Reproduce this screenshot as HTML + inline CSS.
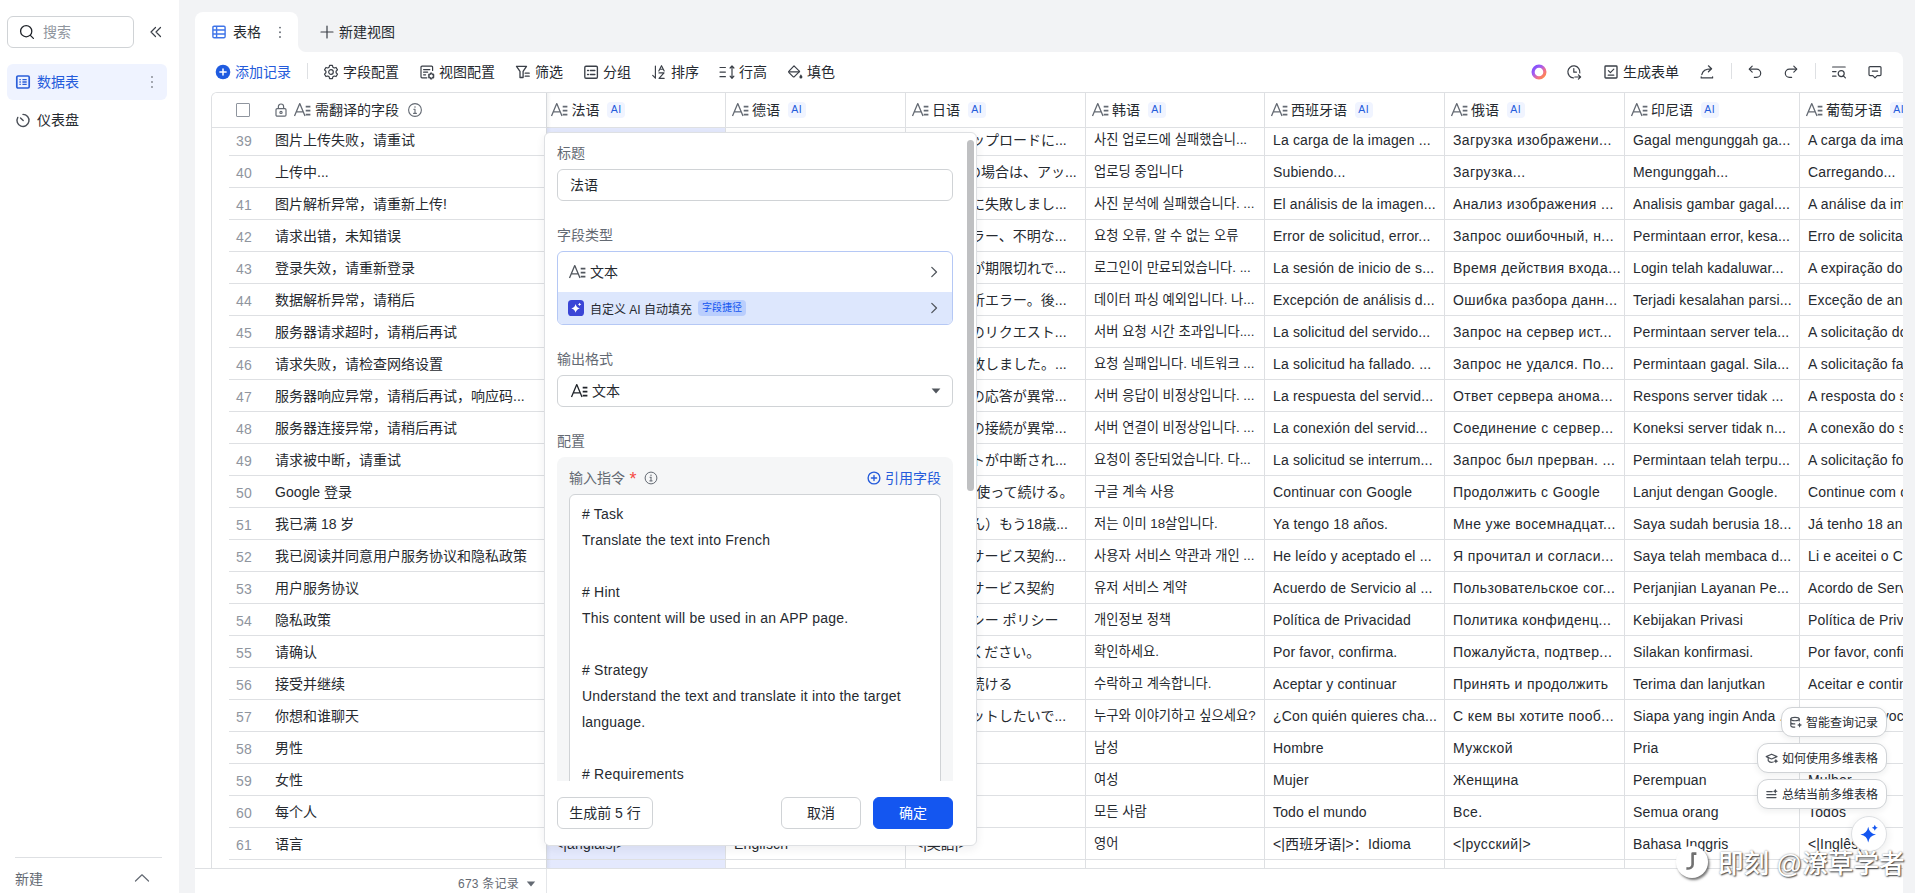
<!DOCTYPE html>
<html lang="zh-CN">
<head>
<meta charset="utf-8">
<title>多维表格</title>
<style>
*{box-sizing:border-box;margin:0;padding:0}
html,body{width:1915px;height:893px;overflow:hidden;background:#fff}
body{font-family:"Liberation Sans","Noto Sans CJK SC",sans-serif;font-size:14px;color:#262a30;position:relative}
.jp{font-family:"Liberation Sans","Noto Sans CJK JP",sans-serif}
.kr{font-family:"Liberation Sans","Noto Sans CJK KR",sans-serif}
.abs{position:absolute}
svg{display:block}
#sidebar{position:absolute;left:0;top:0;width:179px;height:893px;background:#fff}
#mainbg{position:absolute;left:179px;top:0;width:1736px;height:893px;background:#f2f3f5}
#panel{position:absolute;left:195px;top:52px;width:1708px;height:841px;background:#fff;border-radius:0 8px 0 0}
#tab{position:absolute;left:195px;top:12px;width:103px;height:41px;background:#fff;border-radius:8px 8px 0 0}
#tabcurve{position:absolute;left:298px;top:44px;width:8px;height:8px;background:radial-gradient(circle at 100% 0,#f2f3f5 7.5px,#fff 8.5px)}
.t{position:absolute;white-space:nowrap;line-height:20px;height:20px}
.g{color:#646a73}
.grid{position:absolute;left:211px;top:92px;width:1692px;height:777px;overflow:hidden;border-top:1px solid #dee0e3;border-left:1px solid #dee0e3;border-radius:6px 0 0 0}
.row{position:absolute;left:17px;height:32px;width:1700px;border-bottom:1px solid #dee0e3}
.cell{position:absolute;top:0;height:31px;line-height:31px;white-space:nowrap;overflow:hidden;font-size:14px;padding-left:8px;border-left:1px solid #dee0e3}
.cell.la{line-height:33px;letter-spacing:.15px}
.cell.ru{line-height:33px;letter-spacing:.38px}
.cell.kr{font-size:13.3px;line-height:32px}
.cell.jp{padding-left:9px;line-height:32.6px}
.num{position:absolute;left:7px;top:1.3px;line-height:32px;color:#8f959e;font-size:14px;letter-spacing:.3px}
.c0{position:absolute;left:46px;top:0;line-height:32px;white-space:nowrap}
.hdr{position:absolute;left:0;top:0;width:1700px;height:35px;background:#fff;border-bottom:1px solid #dee0e3}
.hc{position:absolute;top:0;height:34px;border-left:1px solid #dee0e3}
.hc .ic-at{position:absolute;left:4.5px;top:9px;color:#646a73}
.hc .ht{position:absolute;left:26px;top:7px;line-height:20px;white-space:nowrap}
.ai{position:absolute;top:9px;width:18px;height:16px;border-radius:4px;background:#f0f4ff;color:#245bdb;font-size:10.5px;line-height:15px;text-align:center;letter-spacing:.4px;padding-left:.4px}
.footer{position:absolute;left:195px;top:868px;width:1708px;height:25px;border-top:1px solid #dee0e3;background:#fff}
.modal{position:absolute;left:544px;top:132px;width:433px;height:714px;background:#fff;border:1px solid #dee0e3;border-radius:6px;box-shadow:0 3px 10px rgba(31,35,41,.07);overflow:hidden}
.lbl{position:absolute;left:12px;line-height:20px;color:#646a73;font-size:14px}
.inp{position:absolute;left:12px;width:396px;height:32px;border:1px solid #d0d3d6;border-radius:6px;background:#fff}
.btn{position:absolute;height:32px;border:1px solid #d0d3d6;border-radius:6px;background:#fff;line-height:30px;text-align:center;font-size:14px}
.pill{position:absolute;height:30px;border:1px solid #d0d3d6;border-radius:11px;background:#fff;box-shadow:0 2px 6px rgba(31,35,41,.08);font-size:12px;line-height:27px;white-space:nowrap}
</style>
</head>
<body>
<div id="sidebar">
<div class="abs" style="left:7px;top:16px;width:127px;height:32px;border:1px solid #d0d3d6;border-radius:6px"></div>
<svg class="abs" style="left:19px;top:24px" width="16" height="16" viewBox="0 0 16 16" fill="none" stroke="#1f2329" stroke-width="1.3" stroke-linecap="round"><circle cx="7.2" cy="7.2" r="5.6"/><path d="M11.4 11.4 L14.4 14.4"/></svg>
<div class="t" style="left:43px;top:22px;color:#8f959e">搜索</div>
<svg class="abs" style="left:148px;top:24px" width="16" height="16" viewBox="0 0 16 16" fill="none" stroke="#3a3f47" stroke-width="1.2" stroke-linecap="round" stroke-linejoin="round"><path d="M7.5 3.5 L3 8 L7.5 12.5 M12.5 3.5 L8 8 L12.5 12.5"/></svg>
<div class="abs" style="left:7px;top:64px;width:160px;height:36px;border-radius:6px;background:#eff3ff"></div>
<svg class="abs" style="left:15px;top:74px" width="16" height="16" viewBox="0 0 16 16" fill="none" stroke="#2b5fd9" stroke-width="1.7" stroke-linejoin="round"><rect x="1.8" y="2" width="12.4" height="12" rx="1.2"/><path d="M4.4 5.6 H5.8 M7.4 5.6 H11.7 M4.4 8 H5.8 M7.4 8 H11.7 M4.4 10.4 H5.8 M7.4 10.4 H11.7" stroke-linecap="butt" stroke-width="1.4"/></svg>
<div class="t" style="left:37px;top:72px;color:#245bdb">数据表</div>
<svg class="abs" style="left:149px;top:75px" width="6" height="14" viewBox="0 0 6 14" fill="#80858d"><circle cx="3" cy="2" r=".9"/><circle cx="3" cy="7" r=".9"/><circle cx="3" cy="12" r=".9"/></svg>
<svg class="abs" style="left:15px;top:112px" width="16" height="16" viewBox="0 0 16 16" fill="none" stroke="#4a4f57" stroke-width="1.4" stroke-linecap="round"><path d="M8 2.4 A6 6 0 1 1 2.8 5.4"/><path d="M8.2 8.6 L5.5 5.9"/></svg>
<div class="t" style="left:37px;top:110px">仪表盘</div>
<div class="abs" style="left:15px;top:857px;width:147px;height:1px;background:#dee0e3"></div>
<div class="t g" style="left:15px;top:869px">新建</div>
<svg class="abs" style="left:134px;top:872px" width="16" height="12" viewBox="0 0 16 12" fill="none" stroke="#646a73" stroke-width="1.2" stroke-linecap="round" stroke-linejoin="round"><path d="M1.5 9 L8 2.8 L14.5 9"/></svg>
</div>
<div id="mainbg"></div>
<div id="tab"></div><div id="tabcurve"></div>
<div id="panel"></div>
<svg class="abs" style="left:212px;top:25px" width="14" height="14" viewBox="0 0 14 14" fill="none" stroke="#3f74e8" stroke-width="1.4"><rect x=".9" y="1.2" width="12.2" height="11.6" rx="1.2"/><path d="M.9 5 H13.1 M.9 9 H13.1 M4.6 1.2 V12.8"/></svg>
<div class="t" style="left:233px;top:22px">表格</div>
<svg class="abs" style="left:277px;top:26px" width="6" height="14" viewBox="0 0 6 14" fill="#646a73"><circle cx="3" cy="1.6" r=".95"/><circle cx="3" cy="6.3" r=".95"/><circle cx="3" cy="11" r=".95"/></svg>
<svg class="abs" style="left:320px;top:25px" width="14" height="14" viewBox="0 0 14 14" fill="none" stroke="#3a3f47" stroke-width="1.2" stroke-linecap="round"><path d="M7 1 V13 M1 7 H13"/></svg>
<div class="t" style="left:339px;top:22px">新建视图</div>
<svg class="abs" style="left:215px;top:64px" width="16" height="16" viewBox="0 0 16 16"><circle cx="8" cy="8" r="7.3" fill="#1f5be0"/><path d="M8 4.9 V11.1 M4.9 8 H11.1" stroke="#fff" stroke-width="1.5" stroke-linecap="round"/></svg>
<div class="t" style="left:235px;top:62px;color:#245bdb">添加记录</div>
<div class="abs" style="left:307px;top:63px;width:1px;height:16px;background:#dee0e3"></div>
<svg class="abs" style="left:323px;top:64px" width="16" height="16" viewBox="0 0 16 16" fill="none" stroke="#3a3f47" stroke-width="1.2" stroke-linejoin="round"><path d="M9.85 3.19 L9.41 1.35 L6.59 1.35 L6.15 3.19 L4.76 4.00 L2.95 3.45 L1.53 5.90 L2.91 7.19 L2.91 8.81 L1.53 10.10 L2.95 12.55 L4.76 12.00 L6.15 12.81 L6.59 14.65 L9.41 14.65 L9.85 12.81 L11.24 12.00 L13.05 12.55 L14.47 10.10 L13.09 8.81 L13.09 7.19 L14.47 5.90 L13.05 3.45 L11.24 4.00Z"/><circle cx="8" cy="8" r="2.3"/></svg>
<div class="t" style="left:343px;top:62px">字段配置</div>
<svg class="abs" style="left:419px;top:64px" width="16" height="16" viewBox="0 0 16 16" fill="none" stroke="#3a3f47" stroke-width="1.2" stroke-linecap="round" stroke-linejoin="round"><path d="M13.6 6.4 V3.2 a1 1 0 0 0 -1 -1 H3 a1 1 0 0 0 -1 1 v9.6 a1 1 0 0 0 1 1 H7.8"/><path d="M4.6 5.6 H10.8 M4.6 8.2 H8.6 M4.6 10.8 H6.6"/><path d="M12.97 10.26 L12.85 9.17 L11.55 9.17 L11.43 10.26 L11.08 10.46 L10.08 10.02 L9.43 11.15 L10.31 11.80 L10.31 12.20 L9.43 12.85 L10.08 13.98 L11.08 13.54 L11.43 13.74 L11.55 14.83 L12.85 14.83 L12.97 13.74 L13.32 13.54 L14.32 13.98 L14.97 12.85 L14.09 12.20 L14.09 11.80 L14.97 11.15 L14.32 10.02 L13.32 10.46Z" stroke-width="1.1"/></svg>
<div class="t" style="left:439px;top:62px">视图配置</div>
<svg class="abs" style="left:514px;top:64px" width="16" height="16" viewBox="0 0 16 16" fill="none" stroke="#3a3f47" stroke-width="1.3" stroke-linecap="round" stroke-linejoin="round"><path d="M2.5 2.3 H12.5 L9.1 7.3 V13.5 H6 V7.3 Z"/><path d="M11.2 9.2 H15.2 M11.2 12.2 H15.2"/></svg>
<div class="t" style="left:535px;top:62px">筛选</div>
<svg class="abs" style="left:583px;top:64px" width="16" height="16" viewBox="0 0 16 16" fill="none" stroke="#3a3f47" stroke-width="1.35" stroke-linecap="round" stroke-linejoin="round"><rect x="1.8" y="2.2" width="12.6" height="12" rx="1.2"/><path d="M4.6 6.4 H5.4 M7.4 6.4 H11.8 M4.6 10.6 H5.4 M7.4 10.6 H11.8" stroke-width="1.5"/></svg>
<div class="t" style="left:603px;top:62px">分组</div>
<svg class="abs" style="left:651px;top:64px" width="16" height="16" viewBox="0 0 16 16" fill="none" stroke="#3a3f47" stroke-width="1.15" stroke-linecap="round" stroke-linejoin="round"><path d="M4.4 2 V14.2 L1.7 11.4"/><path d="M7.8 7 L10.5 1.7 L13.2 7 M8.8 5.2 H12.2"/><path d="M8 8.9 H13 L8 14.3 H13.2"/></svg>
<div class="t" style="left:671px;top:62px">排序</div>
<svg class="abs" style="left:718px;top:64px" width="18" height="16" viewBox="0 0 18 16" fill="none" stroke="#3a3f47" stroke-width="1.2" stroke-linecap="round" stroke-linejoin="round"><path d="M2 3.5 H7.4 M2 8.1 H7.4 M2 12.7 H7.4"/><path d="M14 2 V14.2 M12.1 4 L14 1.9 L15.9 4 M12.1 12.2 L14 14.3 L15.9 12.2"/></svg>
<div class="t" style="left:739px;top:62px">行高</div>
<svg class="abs" style="left:787px;top:64px" width="17" height="16" viewBox="0 0 17 16" fill="none" stroke="#3a3f47" stroke-width="1.2" stroke-linecap="round" stroke-linejoin="round"><path d="M7 1.8 L12.6 7.4 L7.4 12.6 a1 1 0 0 1 -1.4 0 L2 8.6 a1 1 0 0 1 0 -1.4 Z"/><path d="M2 7.8 H12.2"/><path d="M13.9 10.2 c1 1.4 1.5 2.2 1.5 2.9 a1.5 1.5 0 0 1 -3 0 c0-.7.5-1.5 1.5-2.9z" fill="#3a3f47" stroke="none"/></svg>
<div class="t" style="left:807px;top:62px">填色</div>
<svg class="abs" style="left:1530px;top:63px" width="18" height="18" viewBox="0 0 18 18"><defs><linearGradient id="rg" x1="0" y1="0" x2="1" y2="1"><stop offset="0" stop-color="#7a4dff"/><stop offset=".35" stop-color="#a35cf2"/><stop offset=".68" stop-color="#f2708c"/><stop offset="1" stop-color="#ff8f3a"/></linearGradient></defs><circle cx="9" cy="9" r="5.9" fill="none" stroke="url(#rg)" stroke-width="3.2"/></svg>
<svg class="abs" style="left:1566px;top:64px" width="16" height="16" viewBox="0 0 16 16" fill="none" stroke="#3a3f47" stroke-width="1.2" stroke-linecap="round" stroke-linejoin="round"><path d="M13.8 8.8 A6 6 0 1 0 7.4 13.9"/><path d="M7.8 4.6 V8.2 H10.4"/><path d="M8.8 13 H14.4 M12.4 10.9 L14.6 13 L12.4 15.1"/></svg>
<svg class="abs" style="left:1603px;top:64px" width="16" height="16" viewBox="0 0 16 16" fill="none" stroke="#3a3f47" stroke-width="1.2" stroke-linecap="round" stroke-linejoin="round"><rect x="2" y="2" width="12" height="12" rx=".8" stroke-width="1.35"/><path d="M5.4 6.6 L7.4 8.6 L10.8 5.2 M5.2 11.2 H10.8"/></svg>
<div class="t" style="left:1623px;top:62px">生成表单</div>
<svg class="abs" style="left:1699px;top:64px" width="16" height="16" viewBox="0 0 16 16" fill="none" stroke="#3a3f47" stroke-width="1.2" stroke-linecap="round" stroke-linejoin="round"><path d="M2.8 10.6 C3.6 6.8 6.8 4.8 12 4.8 M9.4 1.8 L12.6 4.8 L9.4 7.8"/><path d="M2.2 12.8 V13.9 H13.6 V12.8"/></svg>
<div class="abs" style="left:1731px;top:63px;width:1px;height:16px;background:#dee0e3"></div>
<svg class="abs" style="left:1747px;top:64px" width="16" height="16" viewBox="0 0 16 16" fill="none" stroke="#3a3f47" stroke-width="1.2" stroke-linecap="round" stroke-linejoin="round"><path d="M5.2 2.2 L2.2 5.2 L5.2 8.2"/><path d="M2.6 5.2 H9.6 a4.1 4.1 0 0 1 0 8.2 H7.4"/></svg>
<svg class="abs" style="left:1783px;top:64px" width="16" height="16" viewBox="0 0 16 16" fill="none" stroke="#3a3f47" stroke-width="1.2" stroke-linecap="round" stroke-linejoin="round"><path d="M10.8 2.2 L13.8 5.2 L10.8 8.2"/><path d="M13.4 5.2 H6.4 a4.1 4.1 0 0 0 0 8.2 H8.6"/></svg>
<div class="abs" style="left:1815px;top:63px;width:1px;height:16px;background:#dee0e3"></div>
<svg class="abs" style="left:1831px;top:64px" width="16" height="16" viewBox="0 0 16 16" fill="none" stroke="#3a3f47" stroke-width="1.2" stroke-linecap="round" stroke-linejoin="round"><path d="M1.6 3 H14.2 M1.6 7.6 H5 M1.6 12.2 H5"/><circle cx="10.2" cy="9.6" r="3"/><path d="M12.4 11.9 L14.4 13.9"/></svg>
<svg class="abs" style="left:1867px;top:64px" width="16" height="16" viewBox="0 0 16 16" fill="none" stroke="#3a3f47" stroke-width="1.2" stroke-linecap="round" stroke-linejoin="round"><path d="M2 3.6 a1 1 0 0 1 1-1 H13 a1 1 0 0 1 1 1 V10.6 a1 1 0 0 1 -1 1 H10.2 L8 13.8 L5.8 11.6 H3 a1 1 0 0 1 -1-1 Z"/><path d="M5.4 7.2 H10.6"/></svg>
<div class="grid">
<div class="abs" style="left:335px;top:35px;width:178px;height:745px;background:#e4e9fd"></div>
<div class="row" style="top:31px"><span class="num">39</span><span class="c0">图片上传失败，请重试</span><span class="cell la" style="left:317px;width:179px"></span><span class="cell la" style="left:496px;width:180px"></span><span class="cell jp" style="left:676px;width:180px">写真のアップロードに...</span><span class="cell kr" style="left:856px;width:179px">사진 업로드에 실패했습니...</span><span class="cell la" style="left:1035px;width:180px">La carga de la imagen ...</span><span class="cell ru" style="left:1215px;width:180px">Загрузка изображени...</span><span class="cell la" style="left:1395px;width:175px">Gagal mengunggah ga...</span><span class="cell la" style="left:1570px;width:181px">A carga da imagem falhou</span></div>
<div class="row" style="top:63px"><span class="num">40</span><span class="c0">上传中...</span><span class="cell la" style="left:317px;width:179px"></span><span class="cell la" style="left:496px;width:180px"></span><span class="cell jp" style="left:676px;width:180px;padding-left:19px">読込中の場合は、アッ...</span><span class="cell kr" style="left:856px;width:179px">업로딩 중입니다</span><span class="cell la" style="left:1035px;width:180px">Subiendo...</span><span class="cell ru" style="left:1215px;width:180px">Загрузка...</span><span class="cell la" style="left:1395px;width:175px">Mengunggah...</span><span class="cell la" style="left:1570px;width:181px">Carregando...</span></div>
<div class="row" style="top:95px"><span class="num">41</span><span class="c0">图片解析异常，请重新上传!</span><span class="cell la" style="left:317px;width:179px"></span><span class="cell la" style="left:496px;width:180px"></span><span class="cell jp" style="left:676px;width:180px">写真解析に失敗しまし...</span><span class="cell kr" style="left:856px;width:179px">사진 분석에 실패했습니다. ...</span><span class="cell la" style="left:1035px;width:180px">El análisis de la imagen...</span><span class="cell ru" style="left:1215px;width:180px">Анализ изображения ...</span><span class="cell la" style="left:1395px;width:175px">Analisis gambar gagal....</span><span class="cell la" style="left:1570px;width:181px">A análise da imagem falhou</span></div>
<div class="row" style="top:127px"><span class="num">42</span><span class="c0">请求出错，未知错误</span><span class="cell la" style="left:317px;width:179px"></span><span class="cell la" style="left:496px;width:180px"></span><span class="cell jp" style="left:676px;width:180px">要求のエラー、不明な...</span><span class="cell kr" style="left:856px;width:179px">요청 오류, 알 수 없는 오류</span><span class="cell la" style="left:1035px;width:180px">Error de solicitud, error...</span><span class="cell ru" style="left:1215px;width:180px">Запрос ошибочный, н...</span><span class="cell la" style="left:1395px;width:175px">Permintaan error, kesa...</span><span class="cell la" style="left:1570px;width:181px">Erro de solicitação, erro</span></div>
<div class="row" style="top:159px"><span class="num">43</span><span class="c0">登录失效，请重新登录</span><span class="cell la" style="left:317px;width:179px"></span><span class="cell la" style="left:496px;width:180px"></span><span class="cell jp" style="left:676px;width:180px">ログインが期限切れで...</span><span class="cell kr" style="left:856px;width:179px">로그인이 만료되었습니다. ...</span><span class="cell la" style="left:1035px;width:180px">La sesión de inicio de s...</span><span class="cell ru" style="left:1215px;width:180px">Время действия входа...</span><span class="cell la" style="left:1395px;width:175px">Login telah kadaluwar...</span><span class="cell la" style="left:1570px;width:181px">A expiração do login</span></div>
<div class="row" style="top:191px"><span class="num">44</span><span class="c0">数据解析异常，请稍后</span><span class="cell la" style="left:317px;width:179px"></span><span class="cell la" style="left:496px;width:180px"></span><span class="cell jp" style="left:676px;width:180px">データ解析エラー。後...</span><span class="cell kr" style="left:856px;width:179px">데이터 파싱 예외입니다. 나...</span><span class="cell la" style="left:1035px;width:180px">Excepción de análisis d...</span><span class="cell ru" style="left:1215px;width:180px">Ошибка разбора данн...</span><span class="cell la" style="left:1395px;width:175px">Terjadi kesalahan parsi...</span><span class="cell la" style="left:1570px;width:181px">Exceção de análise de dados</span></div>
<div class="row" style="top:223px"><span class="num">45</span><span class="c0">服务器请求超时，请稍后再试</span><span class="cell la" style="left:317px;width:179px"></span><span class="cell la" style="left:496px;width:180px"></span><span class="cell jp" style="left:676px;width:180px">サーバーのリクエスト...</span><span class="cell kr" style="left:856px;width:179px">서버 요청 시간 초과입니다....</span><span class="cell la" style="left:1035px;width:180px">La solicitud del servido...</span><span class="cell ru" style="left:1215px;width:180px">Запрос на сервер ист...</span><span class="cell la" style="left:1395px;width:175px">Permintaan server tela...</span><span class="cell la" style="left:1570px;width:181px">A solicitação do servidor</span></div>
<div class="row" style="top:255px"><span class="num">46</span><span class="c0">请求失败，请检查网络设置</span><span class="cell la" style="left:317px;width:179px"></span><span class="cell la" style="left:496px;width:180px"></span><span class="cell jp" style="left:676px;width:180px">要求が失敗しました。...</span><span class="cell kr" style="left:856px;width:179px">요청 실패입니다. 네트워크 ...</span><span class="cell la" style="left:1035px;width:180px">La solicitud ha fallado. ...</span><span class="cell ru" style="left:1215px;width:180px">Запрос не удался. По...</span><span class="cell la" style="left:1395px;width:175px">Permintaan gagal. Sila...</span><span class="cell la" style="left:1570px;width:181px">A solicitação falhou</span></div>
<div class="row" style="top:287px"><span class="num">47</span><span class="c0">服务器响应异常，请稍后再试，响应码...</span><span class="cell la" style="left:317px;width:179px"></span><span class="cell la" style="left:496px;width:180px"></span><span class="cell jp" style="left:676px;width:180px">サーバーの応答が異常...</span><span class="cell kr" style="left:856px;width:179px">서버 응답이 비정상입니다. ...</span><span class="cell la" style="left:1035px;width:180px">La respuesta del servid...</span><span class="cell ru" style="left:1215px;width:180px">Ответ сервера анома...</span><span class="cell la" style="left:1395px;width:175px">Respons server tidak ...</span><span class="cell la" style="left:1570px;width:181px">A resposta do servidor</span></div>
<div class="row" style="top:319px"><span class="num">48</span><span class="c0">服务器连接异常，请稍后再试</span><span class="cell la" style="left:317px;width:179px"></span><span class="cell la" style="left:496px;width:180px"></span><span class="cell jp" style="left:676px;width:180px">サーバーの接続が異常...</span><span class="cell kr" style="left:856px;width:179px">서버 연결이 비정상입니다. ...</span><span class="cell la" style="left:1035px;width:180px">La conexión del servid...</span><span class="cell ru" style="left:1215px;width:180px">Соединение с сервер...</span><span class="cell la" style="left:1395px;width:175px">Koneksi server tidak n...</span><span class="cell la" style="left:1570px;width:181px">A conexão do servidor</span></div>
<div class="row" style="top:351px"><span class="num">49</span><span class="c0">请求被中断，请重试</span><span class="cell la" style="left:317px;width:179px"></span><span class="cell la" style="left:496px;width:180px"></span><span class="cell jp" style="left:676px;width:180px">リクエストが中断され...</span><span class="cell kr" style="left:856px;width:179px">요청이 중단되었습니다. 다...</span><span class="cell la" style="left:1035px;width:180px">La solicitud se interrum...</span><span class="cell ru" style="left:1215px;width:180px">Запрос был прерван. ...</span><span class="cell la" style="left:1395px;width:175px">Permintaan telah terpu...</span><span class="cell la" style="left:1570px;width:181px">A solicitação foi interrompida</span></div>
<div class="row" style="top:383px"><span class="num">50</span><span class="c0">Google 登录</span><span class="cell la" style="left:317px;width:179px"></span><span class="cell la" style="left:496px;width:180px"></span><span class="cell jp" style="left:676px;width:180px;padding-left:11px">Googleを使って続ける。</span><span class="cell kr" style="left:856px;width:179px">구글 계속 사용</span><span class="cell la" style="left:1035px;width:180px">Continuar con Google</span><span class="cell ru" style="left:1215px;width:180px">Продолжить с Google</span><span class="cell la" style="left:1395px;width:175px">Lanjut dengan Google.</span><span class="cell la" style="left:1570px;width:181px">Continue com o Google</span></div>
<div class="row" style="top:415px"><span class="num">51</span><span class="c0">我已满 18 岁</span><span class="cell la" style="left:317px;width:179px"></span><span class="cell la" style="left:496px;width:180px"></span><span class="cell jp" style="left:676px;width:180px">（みなさん）もう18歳...</span><span class="cell kr" style="left:856px;width:179px">저는 이미 18살입니다.</span><span class="cell la" style="left:1035px;width:180px">Ya tengo 18 años.</span><span class="cell ru" style="left:1215px;width:180px">Мне уже восемнадцат...</span><span class="cell la" style="left:1395px;width:175px">Saya sudah berusia 18...</span><span class="cell la" style="left:1570px;width:181px">Já tenho 18 anos</span></div>
<div class="row" style="top:447px"><span class="num">52</span><span class="c0">我已阅读并同意用户服务协议和隐私政策</span><span class="cell la" style="left:317px;width:179px"></span><span class="cell la" style="left:496px;width:180px"></span><span class="cell jp" style="left:676px;width:180px">ユーザーサービス契約...</span><span class="cell kr" style="left:856px;width:179px">사용자 서비스 약관과 개인 ...</span><span class="cell la" style="left:1035px;width:180px">He leído y aceptado el ...</span><span class="cell ru" style="left:1215px;width:180px">Я прочитал и согласи...</span><span class="cell la" style="left:1395px;width:175px">Saya telah membaca d...</span><span class="cell la" style="left:1570px;width:181px">Li e aceitei o Contrato</span></div>
<div class="row" style="top:479px"><span class="num">53</span><span class="c0">用户服务协议</span><span class="cell la" style="left:317px;width:179px"></span><span class="cell la" style="left:496px;width:180px"></span><span class="cell jp" style="left:676px;width:180px">ユーザーサービス契約</span><span class="cell kr" style="left:856px;width:179px">유저 서비스 계약</span><span class="cell la" style="left:1035px;width:180px">Acuerdo de Servicio al ...</span><span class="cell ru" style="left:1215px;width:180px">Пользовательское сог...</span><span class="cell la" style="left:1395px;width:175px">Perjanjian Layanan Pe...</span><span class="cell la" style="left:1570px;width:181px">Acordo de Serviço</span></div>
<div class="row" style="top:511px"><span class="num">54</span><span class="c0">隐私政策</span><span class="cell la" style="left:317px;width:179px"></span><span class="cell la" style="left:496px;width:180px"></span><span class="cell jp" style="left:676px;width:180px">プライバシー ポリシー</span><span class="cell kr" style="left:856px;width:179px">개인정보 정책</span><span class="cell la" style="left:1035px;width:180px">Política de Privacidad</span><span class="cell ru" style="left:1215px;width:180px">Политика конфиденц...</span><span class="cell la" style="left:1395px;width:175px">Kebijakan Privasi</span><span class="cell la" style="left:1570px;width:181px">Política de Privacidade</span></div>
<div class="row" style="top:543px"><span class="num">55</span><span class="c0">请确认</span><span class="cell la" style="left:317px;width:179px"></span><span class="cell la" style="left:496px;width:180px"></span><span class="cell jp" style="left:676px;width:180px">確認してください。</span><span class="cell kr" style="left:856px;width:179px">확인하세요.</span><span class="cell la" style="left:1035px;width:180px">Por favor, confirma.</span><span class="cell ru" style="left:1215px;width:180px">Пожалуйста, подтвер...</span><span class="cell la" style="left:1395px;width:175px">Silakan konfirmasi.</span><span class="cell la" style="left:1570px;width:181px">Por favor, confirme</span></div>
<div class="row" style="top:575px"><span class="num">56</span><span class="c0">接受并继续</span><span class="cell la" style="left:317px;width:179px"></span><span class="cell la" style="left:496px;width:180px"></span><span class="cell jp" style="left:676px;width:180px">同意して続ける</span><span class="cell kr" style="left:856px;width:179px">수락하고 계속합니다.</span><span class="cell la" style="left:1035px;width:180px">Aceptar y continuar</span><span class="cell ru" style="left:1215px;width:180px">Принять и продолжить</span><span class="cell la" style="left:1395px;width:175px">Terima dan lanjutkan</span><span class="cell la" style="left:1570px;width:181px">Aceitar e continuar</span></div>
<div class="row" style="top:607px"><span class="num">57</span><span class="c0">你想和谁聊天</span><span class="cell la" style="left:317px;width:179px"></span><span class="cell la" style="left:496px;width:180px"></span><span class="cell jp" style="left:676px;width:180px">誰とチャットしたいで...</span><span class="cell kr" style="left:856px;width:179px">누구와 이야기하고 싶으세요?</span><span class="cell la" style="left:1035px;width:180px">¿Con quién quieres cha...</span><span class="cell ru" style="left:1215px;width:180px">С кем вы хотите пооб...</span><span class="cell la" style="left:1395px;width:175px">Siapa yang ingin Anda ...</span><span class="cell la" style="left:1570px;width:181px">Com quem você</span></div>
<div class="row" style="top:639px"><span class="num">58</span><span class="c0">男性</span><span class="cell la" style="left:317px;width:179px"></span><span class="cell la" style="left:496px;width:180px"></span><span class="cell jp" style="left:676px;width:180px">男性</span><span class="cell kr" style="left:856px;width:179px">남성</span><span class="cell la" style="left:1035px;width:180px">Hombre</span><span class="cell ru" style="left:1215px;width:180px">Мужской</span><span class="cell la" style="left:1395px;width:175px">Pria</span><span class="cell la" style="left:1570px;width:181px">Homem</span></div>
<div class="row" style="top:671px"><span class="num">59</span><span class="c0">女性</span><span class="cell la" style="left:317px;width:179px"></span><span class="cell la" style="left:496px;width:180px"></span><span class="cell jp" style="left:676px;width:180px">女性</span><span class="cell kr" style="left:856px;width:179px">여성</span><span class="cell la" style="left:1035px;width:180px">Mujer</span><span class="cell ru" style="left:1215px;width:180px">Женщина</span><span class="cell la" style="left:1395px;width:175px">Perempuan</span><span class="cell la" style="left:1570px;width:181px">Mulher</span></div>
<div class="row" style="top:703px"><span class="num">60</span><span class="c0">每个人</span><span class="cell la" style="left:317px;width:179px"></span><span class="cell la" style="left:496px;width:180px"></span><span class="cell jp" style="left:676px;width:180px">全員</span><span class="cell kr" style="left:856px;width:179px">모든 사람</span><span class="cell la" style="left:1035px;width:180px">Todo el mundo</span><span class="cell ru" style="left:1215px;width:180px">Все.</span><span class="cell la" style="left:1395px;width:175px">Semua orang</span><span class="cell la" style="left:1570px;width:181px">Todos</span></div>
<div class="row" style="top:735px"><span class="num">61</span><span class="c0">语言</span><span class="cell la" style="left:317px;width:179px">&lt;|anglais|&gt;</span><span class="cell la" style="left:496px;width:180px">Englisch</span><span class="cell jp" style="left:676px;width:180px">&lt;|英語|&gt;</span><span class="cell kr" style="left:856px;width:179px">영어</span><span class="cell la" style="left:1035px;width:180px">&lt;|西班牙语|&gt;：Idioma</span><span class="cell ru" style="left:1215px;width:180px">&lt;|русский|&gt;</span><span class="cell la" style="left:1395px;width:175px">Bahasa Inggris</span><span class="cell la" style="left:1570px;width:181px">&lt;|Inglês|&gt;</span></div>
<div class="row" style="top:767px"><span class="cell la" style="left:317px;width:179px"></span><span class="cell la" style="left:496px;width:180px"></span><span class="cell jp" style="left:676px;width:180px"></span><span class="cell kr" style="left:856px;width:179px"></span><span class="cell la" style="left:1035px;width:180px"></span><span class="cell ru" style="left:1215px;width:180px"></span><span class="cell la" style="left:1395px;width:175px"></span><span class="cell la" style="left:1570px;width:181px"></span></div>
<div class="hdr"><div class="abs" style="left:24px;top:10px;width:14px;height:14px;border:1.5px solid #8f959e;border-radius:1px"></div><svg class="abs" style="left:61px;top:9px" width="16" height="16" viewBox="0 0 16 16" fill="none" stroke="#646a73" stroke-width="1.2" stroke-linejoin="round"><rect x="3" y="6.6" width="10" height="7.6" rx="1.2"/><path d="M5.4 6.6 V4.6 a2.6 2.6 0 0 1 5.2 0 V6.6"/><circle cx="8" cy="10.4" r="1.1"/></svg><span class="abs" style="left:81px;top:9px;color:#646a73"><svg class="ic-at" width="18" height="16" viewBox="0 0 18 16" fill="none" stroke="currentColor" stroke-width="1.3" stroke-linejoin="round"><path d="M1.5 14 L6.75 1.6 L12 14 M3.4 9.8 H10.1"/><path d="M12.7 4.6 H17.4 M12.7 8.6 H17.4 M12.7 12.6 H17.4" stroke-width="1.65"/></svg></span><span class="t" style="left:103px;top:7px">需翻译的字段</span><svg class="abs" style="left:195px;top:9px" width="16" height="16" viewBox="0 0 16 16" fill="none" stroke="#646a73" stroke-width="1.1"><circle cx="8" cy="8" r="6.4"/><path d="M8 7.2 V11.4 M6.8 7.2 H8 M6.6 11.4 H9.4" stroke-linecap="round"/><circle cx="8" cy="4.9" r=".75" fill="#646a73" stroke="none"/></svg><div class="hc" style="left:334px;width:179px"><span class="abs" style="left:-1.0499999999999998px;top:0"><svg class="ic-at" width="18" height="16" viewBox="0 0 18 16" fill="none" stroke="currentColor" stroke-width="1.3" stroke-linejoin="round"><path d="M1.5 14 L6.75 1.6 L12 14 M3.4 9.8 H10.1"/><path d="M12.7 4.6 H17.4 M12.7 8.6 H17.4 M12.7 12.6 H17.4" stroke-width="1.65"/></svg></span><span class="ht" style="margin-left:-1.5px">法语</span><span class="ai" style="left:60.0px">AI</span></div><div class="hc" style="left:513px;width:180px"><span class="abs" style="left:0.0px;top:0"><svg class="ic-at" width="18" height="16" viewBox="0 0 18 16" fill="none" stroke="currentColor" stroke-width="1.3" stroke-linejoin="round"><path d="M1.5 14 L6.75 1.6 L12 14 M3.4 9.8 H10.1"/><path d="M12.7 4.6 H17.4 M12.7 8.6 H17.4 M12.7 12.6 H17.4" stroke-width="1.65"/></svg></span><span class="ht" style="margin-left:0px">德语</span><span class="ai" style="left:61.5px">AI</span></div><div class="hc" style="left:693px;width:180px"><span class="abs" style="left:0.0px;top:0"><svg class="ic-at" width="18" height="16" viewBox="0 0 18 16" fill="none" stroke="currentColor" stroke-width="1.3" stroke-linejoin="round"><path d="M1.5 14 L6.75 1.6 L12 14 M3.4 9.8 H10.1"/><path d="M12.7 4.6 H17.4 M12.7 8.6 H17.4 M12.7 12.6 H17.4" stroke-width="1.65"/></svg></span><span class="ht" style="margin-left:0px">日语</span><span class="ai" style="left:61.5px">AI</span></div><div class="hc" style="left:873px;width:179px"><span class="abs" style="left:0.0px;top:0"><svg class="ic-at" width="18" height="16" viewBox="0 0 18 16" fill="none" stroke="currentColor" stroke-width="1.3" stroke-linejoin="round"><path d="M1.5 14 L6.75 1.6 L12 14 M3.4 9.8 H10.1"/><path d="M12.7 4.6 H17.4 M12.7 8.6 H17.4 M12.7 12.6 H17.4" stroke-width="1.65"/></svg></span><span class="ht" style="margin-left:0px">韩语</span><span class="ai" style="left:61.5px">AI</span></div><div class="hc" style="left:1052px;width:180px"><span class="abs" style="left:0.0px;top:0"><svg class="ic-at" width="18" height="16" viewBox="0 0 18 16" fill="none" stroke="currentColor" stroke-width="1.3" stroke-linejoin="round"><path d="M1.5 14 L6.75 1.6 L12 14 M3.4 9.8 H10.1"/><path d="M12.7 4.6 H17.4 M12.7 8.6 H17.4 M12.7 12.6 H17.4" stroke-width="1.65"/></svg></span><span class="ht" style="margin-left:0px">西班牙语</span><span class="ai" style="left:89.5px">AI</span></div><div class="hc" style="left:1232px;width:180px"><span class="abs" style="left:0.0px;top:0"><svg class="ic-at" width="18" height="16" viewBox="0 0 18 16" fill="none" stroke="currentColor" stroke-width="1.3" stroke-linejoin="round"><path d="M1.5 14 L6.75 1.6 L12 14 M3.4 9.8 H10.1"/><path d="M12.7 4.6 H17.4 M12.7 8.6 H17.4 M12.7 12.6 H17.4" stroke-width="1.65"/></svg></span><span class="ht" style="margin-left:0px">俄语</span><span class="ai" style="left:61.5px">AI</span></div><div class="hc" style="left:1412px;width:175px"><span class="abs" style="left:0.0px;top:0"><svg class="ic-at" width="18" height="16" viewBox="0 0 18 16" fill="none" stroke="currentColor" stroke-width="1.3" stroke-linejoin="round"><path d="M1.5 14 L6.75 1.6 L12 14 M3.4 9.8 H10.1"/><path d="M12.7 4.6 H17.4 M12.7 8.6 H17.4 M12.7 12.6 H17.4" stroke-width="1.65"/></svg></span><span class="ht" style="margin-left:0px">印尼语</span><span class="ai" style="left:75.5px">AI</span></div><div class="hc" style="left:1587px;width:181px"><span class="abs" style="left:0.0px;top:0"><svg class="ic-at" width="18" height="16" viewBox="0 0 18 16" fill="none" stroke="currentColor" stroke-width="1.3" stroke-linejoin="round"><path d="M1.5 14 L6.75 1.6 L12 14 M3.4 9.8 H10.1"/><path d="M12.7 4.6 H17.4 M12.7 8.6 H17.4 M12.7 12.6 H17.4" stroke-width="1.65"/></svg></span><span class="ht" style="margin-left:0px">葡萄牙语</span><span class="ai" style="left:89.5px">AI</span></div></div>
</div>
<div class="abs" style="left:546px;top:93px;width:1px;height:775px;background:#d5d8dc"></div>
<div class="abs" style="left:547px;top:93px;width:4px;height:775px;background:linear-gradient(90deg,rgba(31,35,41,.06),rgba(31,35,41,0))"></div>
<div class="footer">
<div class="t" style="left:263px;top:5px;font-size:12px;color:#646a73;letter-spacing:.25px">673 条记录</div>
<svg class="abs" style="left:331px;top:12px" width="10" height="6" viewBox="0 0 10 6"><path d="M.8 .6 H9.2 L5 5.6 Z" fill="#646a73"/></svg>
<div class="abs" style="left:351px;top:0;width:1px;height:25px;background:#e4e6e9"></div>
</div>
<div class="modal"><div class="abs" style="left:0;top:0;width:431px;height:712px">
<div class="lbl" style="top:10px">标题</div>
<div class="inp" style="top:36px"></div>
<div class="t" style="left:25px;top:42px">法语</div>
<div class="lbl" style="top:92px">字段类型</div>
<div class="abs" style="left:12px;top:118px;width:396px;height:74px;border:1px solid #b5c8f5;border-radius:6px;overflow:hidden;background:#fff">
  <div class="abs" style="left:0;top:40px;width:396px;height:33px;background:#dde7fd"></div>
</div>
<span class="abs" style="left:23px;top:131px;color:#51565d"><svg class="ic-at" width="18" height="16" viewBox="0 0 18 16" fill="none" stroke="currentColor" stroke-width="1.3" stroke-linejoin="round"><path d="M1.5 14 L6.75 1.6 L12 14 M3.4 9.8 H10.1"/><path d="M12.7 4.6 H17.4 M12.7 8.6 H17.4 M12.7 12.6 H17.4" stroke-width="1.65"/></svg></span>
<div class="t" style="left:45px;top:129px">文本</div>
<svg class="abs" style="left:383px;top:132px" width="12" height="14" viewBox="0 0 12 14" fill="none" stroke="#51565d" stroke-width="1.3" stroke-linecap="round" stroke-linejoin="round"><path d="M3.8 2.4 L8.5 7 L3.8 11.6"/></svg>
<svg class="abs" style="left:23px;top:167px" width="16" height="16" viewBox="0 0 16 16"><rect x="0" y="0" width="16" height="16" rx="3.6" fill="#3a45d6"/><path d="M7.6 4.1 Q8.3 7.7 11.9 8.4 Q8.3 9.1 7.6 12.7 Q6.9 9.1 3.3 8.4 Q6.9 7.7 7.6 4.1Z" fill="#fff"/><path d="M11.6 2.7 Q11.9 4.1 13.3 4.4 Q11.9 4.7 11.6 6.1 Q11.3 4.7 9.9 4.4 Q11.3 4.1 11.6 2.7Z" fill="#fff"/></svg>
<div class="t" style="left:45px;top:166.6px;font-size:12px">自定义 AI 自动填充</div>
<div class="abs" style="left:153px;top:167px;width:48px;height:16px;border-radius:4px;background:#bacefd;color:#1456f0;font-size:10px;line-height:16px;text-align:center;white-space:nowrap">字段捷径</div>
<svg class="abs" style="left:383px;top:168px" width="12" height="14" viewBox="0 0 12 14" fill="none" stroke="#51565d" stroke-width="1.3" stroke-linecap="round" stroke-linejoin="round"><path d="M3.8 2.4 L8.5 7 L3.8 11.6"/></svg>
<div class="lbl" style="top:216px">输出格式</div>
<div class="inp" style="top:242px"></div>
<span class="abs" style="left:25px;top:250px;color:#1f2329"><svg class="ic-at" width="18" height="16" viewBox="0 0 18 16" fill="none" stroke="currentColor" stroke-width="1.3" stroke-linejoin="round"><path d="M1.5 14 L6.75 1.6 L12 14 M3.4 9.8 H10.1"/><path d="M12.7 4.6 H17.4 M12.7 8.6 H17.4 M12.7 12.6 H17.4" stroke-width="1.65"/></svg></span>
<div class="t" style="left:47px;top:248px">文本</div>
<svg class="abs" style="left:386px;top:255px" width="10" height="6" viewBox="0 0 10 6"><path d="M.6 .4 H9.4 L5 5.6 Z" fill="#51565d"/></svg>
<div class="lbl" style="top:298px">配置</div>
<div class="abs" style="left:12px;top:324px;width:396px;height:331px;border-radius:8px;background:#f5f6f7"></div>
<div class="t g" style="left:24px;top:335px">输入指令</div>
<div class="t" style="left:84.5px;top:336px;color:#f54a45;font-size:18px">*</div>
<svg class="abs" style="left:99px;top:338px" width="14" height="14" viewBox="0 0 14 14" fill="none" stroke="#646a73" stroke-width="1"><circle cx="7" cy="7" r="5.9"/><path d="M7 6.3 V9.9 M6 6.3 H7 M5.8 9.9 H8.2" stroke-linecap="round"/><circle cx="7" cy="4.3" r=".7" fill="#646a73" stroke="none"/></svg>
<svg class="abs" style="left:322px;top:338px" width="14" height="14" viewBox="0 0 14 14" fill="none" stroke="#245bdb" stroke-width="1.35" stroke-linecap="round"><circle cx="7" cy="7" r="5.9"/><path d="M7 4.4 V9.6 M4.4 7 H9.6"/></svg>
<div class="t" style="left:340px;top:335px;color:#245bdb">引用字段</div>
<div class="abs" style="left:24px;top:361px;width:372px;height:300px;border:1px solid #d0d3d6;border-radius:6px;background:#fff"></div>
<div class="abs" style="left:37px;top:368px;width:346px;font-size:14px;line-height:26px;white-space:pre-wrap;letter-spacing:.22px"># Task
Translate the text into French

# Hint
This content will be used in an APP page.

# Strategy
Understand the text and translate it into the target language.

# Requirements
Keep the meaning of the source text.</div>
<div class="abs" style="left:0;top:648px;width:423px;height:65px;background:#fff"></div>
<div class="abs" style="left:422px;top:7px;width:7px;height:351px;border-radius:4px;background:#bfc0c2"></div>
<div class="btn" style="left:12px;top:664px;width:96px">生成前 5 行</div>
<div class="btn" style="left:236px;top:664px;width:80px">取消</div>
<div class="btn" style="left:328px;top:664px;width:80px;background:#1456f0;border-color:#1456f0;color:#fff">确定</div>
</div></div>
<div class="pill" style="left:1781px;top:707px;width:106px"></div>
<svg class="abs" style="left:1789px;top:715px" width="14" height="14" viewBox="0 0 14 14" fill="none" stroke="#4a4f57" stroke-width="1.15" stroke-linecap="round"><ellipse cx="6" cy="4" rx="4.2" ry="1.7"/><path d="M1.8 4 V10.4 c0 .95 1.7 1.7 4 1.7 M1.8 7.2 c0 .95 1.7 1.7 4 1.7 M10.2 4 V6"/><path d="M10.6 7.5 Q11 9.7 13.2 10.1 Q11 10.5 10.6 12.7 Q10.2 10.5 8 10.1 Q10.2 9.7 10.6 7.5Z" fill="#4a4f57" stroke="none"/></svg>
<div class="t" style="left:1806px;top:713px;font-size:12px">智能查询记录</div>
<div class="pill" style="left:1757px;top:743px;width:130px"></div>
<svg class="abs" style="left:1765px;top:751px" width="14" height="14" viewBox="0 0 14 14" fill="none" stroke="#4a4f57" stroke-width="1.15" stroke-linecap="round" stroke-linejoin="round"><path d="M1.2 5.6 L6.6 3.2 L12 5.6 L6.6 8 Z"/><path d="M3.2 6.8 V9.6 c.9 1.5 3.2 2 5 1.4"/><path d="M10.9 7.8 Q11.3 9.8 13.3 10.2 Q11.3 10.6 10.9 12.6 Q10.5 10.6 8.5 10.2 Q10.5 9.8 10.9 7.8Z" fill="#4a4f57" stroke="none"/></svg>
<div class="t" style="left:1782px;top:749px;font-size:12px">如何使用多维表格</div>
<div class="pill" style="left:1757px;top:779px;width:130px"></div>
<svg class="abs" style="left:1765px;top:787px" width="14" height="14" viewBox="0 0 14 14" fill="none" stroke="#4a4f57" stroke-width="1.15" stroke-linecap="round"><path d="M1.8 4.6 H7.2 M1.8 7.6 H11 M1.8 10.6 H11"/><path d="M10.3 1.7 Q10.7 3.8 12.8 4.2 Q10.7 4.6 10.3 6.7 Q9.9 4.6 7.8 4.2 Q9.9 3.8 10.3 1.7Z" fill="#4a4f57" stroke="none"/></svg>
<div class="t" style="left:1782px;top:785px;font-size:12px">总结当前多维表格</div>
<div class="abs" style="left:1851px;top:816px;width:36px;height:36px;border-radius:18px;background:#fff;border:1px solid #dee0e3;box-shadow:0 2px 8px rgba(31,35,41,.10)"></div>
<svg class="abs" style="left:1857px;top:822px" width="24" height="24" viewBox="0 0 24 24"><path d="M11.2 4.8 Q12.3 11.5 19 12.6 Q12.3 13.7 11.2 20.4 Q10.1 13.7 3.4 12.6 Q10.1 11.5 11.2 4.8Z" fill="#1456f0"/><path d="M17.8 2.8 Q18.25 5.35 20.8 5.8 Q18.25 6.25 17.8 8.8 Q17.35 6.25 14.8 5.8 Q17.35 5.35 17.8 2.8Z" fill="#1456f0"/></svg>
<div class="abs" style="left:1676px;top:846px;width:32px;height:32px;border-radius:16px;background:#fff;box-shadow:1.5px 2px 2.5px rgba(0,0,0,.55)"></div>
<svg class="abs" style="left:1676px;top:846px" width="32" height="32" viewBox="0 0 32 32" fill="none" stroke="#707070" stroke-width="2.6" stroke-linejoin="round"><path d="M20.4 7.6 H16.6 V18.4 C16.6 21.6 14 22.8 10.4 22.4"/></svg>
<div class="abs" style="left:1718px;top:847.5px;font-size:25.6px;font-weight:500;line-height:32px;color:#fff;white-space:nowrap;text-shadow:1px 1px 1.5px rgba(0,0,0,.7),0 0 2px rgba(0,0,0,.4)">即刻 @潦草学者</div>
</body>
</html>
